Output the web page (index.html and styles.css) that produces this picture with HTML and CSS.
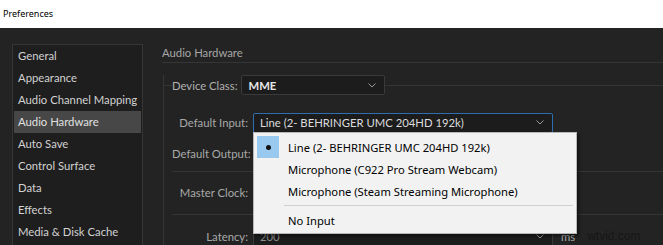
FILE: index.html
```html
<!DOCTYPE html>
<html lang="en">
<head>
    <meta charset="UTF-8">
    <title>Preferences</title>
    <link rel="stylesheet" href="styles.css">
</head>
<body>
    <div class="titlebar">Preferences</div>

    <div class="window">
        <!-- Lista de categorías -->
        <ul class="nav">
            <li>General</li>
            <li>Appearance</li>
            <li>Audio Channel Mapping</li>
            <li class="active">Audio Hardware</li>
            <li>Auto Save</li>
            <li>Control Surface</li>
            <li>Data</li>
            <li>Effects</li>
            <li>Media &amp; Disk Cache</li>
        </ul>

        <!-- Panel de Audio Hardware -->
        <section class="panel">
            <h2 class="panel-title">Audio Hardware</h2>

            <div class="group">
                <div class="group-head">
                    <span class="group-label">Device Class:</span>
                    <div class="select select-small">
                        <span class="value">MME</span>
                        <svg class="chev" width="8" height="5" viewBox="0 0 8 5"><path d="M0.5 0.5 L4 4 L7.5 0.5" fill="none" stroke="#9a9a9a" stroke-width="1"/></svg>
                    </div>
                </div>

                <div class="row row-input">
                    <label>Default Input:</label>
                    <div class="select focus">
                        <span class="value">Line (2- BEHRINGER UMC 204HD 192k)</span>
                        <svg class="chev" width="8" height="5" viewBox="0 0 8 5"><path d="M0.5 0.5 L4 4 L7.5 0.5" fill="none" stroke="#9a9a9a" stroke-width="1"/></svg>
                    </div>

                    <ul class="popup">
                        <li class="checked"><span class="mark"><span class="dot"></span></span>Line (2- BEHRINGER UMC 204HD 192k)</li>
                        <li><span class="mark"></span>Microphone (C922 Pro Stream Webcam)</li>
                        <li><span class="mark"></span>Microphone (Steam Streaming Microphone)</li>
                        <li class="sep"></li>
                        <li><span class="mark"></span>No Input</li>
                    </ul>
                </div>

                <div class="row">
                    <label>Default Output:</label>
                </div>
                <div class="divider"></div>

                <div class="row row-tall">
                    <label>Master Clock:</label>
                </div>
                <div class="divider"></div>

                <div class="row row-last">
                    <label>Latency:</label>
                    <div class="select">
                        <span class="value dim">200</span>
                        <svg class="chev" width="8" height="5" viewBox="0 0 8 5"><path d="M0.5 0.5 L4 4 L7.5 0.5" fill="none" stroke="#9a9a9a" stroke-width="1"/></svg>
                    </div>
                    <span class="unit">ms</span>
                    <span class="watermark">wtvid.com</span>
                </div>
            </div>
        </section>
    </div>
</body>
</html>
```

FILE: styles.css
```css
body {
    margin: 0;
    background-color: #232323;
    font-family: Lato, "Noto Sans", sans-serif;
    font-size: 11.3px;
    color: #c8c8c8;
    height: 245px;
    overflow: hidden;
}
.titlebar {
    height: 28px;
    line-height: 27px;
    background-color: #fff;
    color: #000;
    padding-left: 3px;
    font-family: "Noto Sans", sans-serif;
    font-size: 9px;
}
.window {
    display: flex;
    align-items: flex-start;
}
.nav {
    list-style: none;
    margin: 16px 0 0 12px;
    padding: 0 1px 20px 1px;
    width: 127px;
    background-color: #1e1e1e;
    border: 1px solid #363636;
}
.nav li {
    height: 22px;
    line-height: 22px;
    padding-left: 4px;
    color: #d2d2d2;
    white-space: nowrap;
}
.nav li.active {
    background-color: #474747;
    color: #e0e0e0;
}
.panel {
    flex: 1;
    margin-left: 19px;
    padding-top: 16px;
}
.panel-title {
    margin: 0;
    height: 18px;
    line-height: 18px;
    font-size: 11.3px;
    font-weight: normal;
    color: #a6a6a6;
    border-bottom: 1px solid #353535;
}
.group {
    margin: 22px 0 0 1px;
    border-left: 1px solid #353535;
}
.group-head {
    display: flex;
    align-items: center;
    height: 20px;
    margin-top: -10px;
}
.group-head::before {
    content: "";
    width: 8px;
    border-top: 1px solid #353535;
}
.group-head::after {
    content: "";
    flex: 1;
    border-top: 1px solid #353535;
}
.group-label {
    color: #b0b0b0;
    margin-right: 4px;
}
.select {
    box-sizing: border-box;
    display: flex;
    align-items: center;
    justify-content: space-between;
    width: 300px;
    height: 20px;
    padding: 0 8px 0 6px;
    background-color: #1c1c1c;
    border: 1px solid #3a3a3a;
    border-radius: 2px;
    color: #dcdcdc;
}
.select-small {
    width: 144px;
}
.select-small .value {
    font-weight: bold;
    color: #e6e6e6;
}
.select.focus {
    border-color: #2e6db0;
}
.value.dim {
    color: #8c8c8c;
}
.row {
    position: relative;
    display: flex;
    align-items: center;
    height: 31px;
    padding-left: 8px;
}
.row-input {
    margin-top: 12px;
}
.row-tall {
    height: 40px;
}
.row-last {
    box-sizing: border-box;
    height: 30px;
    padding-top: 12px;
}
.row label {
    width: 76px;
    margin-right: 5px;
    text-align: right;
    color: #a9a9a9;
    white-space: nowrap;
}
.divider {
    height: 1px;
    margin: 2px 0 0 8px;
    background-color: #353535;
}
.unit {
    margin-left: 8px;
    color: #a9a9a9;
}
.watermark {
    margin-left: 12px;
    font-family: "Liberation Sans", sans-serif;
    font-size: 12px;
    color: #161616;
}
.popup {
    position: absolute;
    left: 89px;
    top: 25px;
    width: 324px;
    box-sizing: border-box;
    list-style: none;
    margin: 0;
    padding: 3px 3px 2px 3px;
    background-color: #f2f2f2;
    border: 1px solid #b8b8b8;
    box-shadow: 2px 2px 3px rgba(0, 0, 0, 0.5);
    font-family: "Noto Sans", sans-serif;
    font-size: 11.2px;
    color: #000;
    z-index: 5;
}
.popup li {
    display: flex;
    align-items: center;
    height: 22px;
    white-space: nowrap;
}
.popup .mark {
    display: flex;
    align-items: center;
    justify-content: center;
    width: 22px;
    height: 22px;
    margin-right: 9px;
}
.popup .checked .mark {
    background-color: #99c9ef;
}
.popup .dot {
    width: 5px;
    height: 5px;
    border-radius: 50%;
    background-color: #111;
}
.popup li.sep {
    height: 1px;
    margin: 3px 0 3px 27px;
    background-color: #d0d0d0;
}
```
